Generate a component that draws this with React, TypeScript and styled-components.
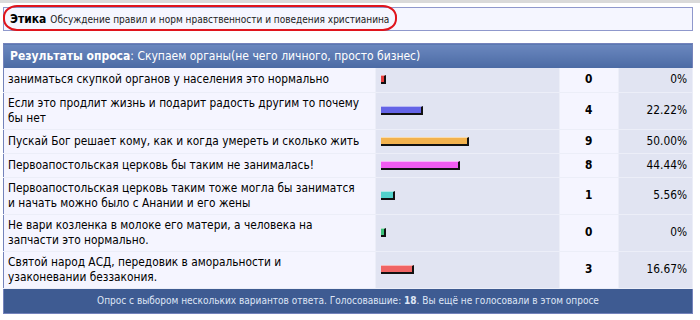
import styled, { createGlobalStyle } from "styled-components";

const GlobalStyle = createGlobalStyle`
  body {
    margin: 0;
    background: #fff;
    font-family: "DejaVu Sans Condensed", "DejaVu Sans", Verdana, sans-serif;
    color: #000;
  }
`;

const Page = styled.div`
  display: flex;
  flex-direction: column;
  width: 700px;
`;

const TopLine = styled.div`
  height: 3px;
  background: #dadada;
`;

const ForumBar = styled.div`
  position: relative;
  margin: 4px 7px 0 3px;
  height: 22px;
  border: 1px solid #8f98cc;
  background: #f5f6ff;
  display: flex;
  align-items: center;
  gap: 4px;
  padding-left: 6px;
`;

const ForumTitle = styled.span`
  font-weight: bold;
  font-size: 12px;
`;

const ForumDesc = styled.span`
  font-size: 10px;
  color: #222;
`;

const Marker = styled.div`
  position: absolute;
  left: -1px;
  top: -3px;
  width: 390px;
  height: 22px;
  border: 2px solid #e0141c;
  border-radius: 14px / 12px;
`;

const PollTable = styled.table`
  margin: 12px 7px 0 3px;
  width: 690px;
  table-layout: fixed;
  border: 1px solid #7483bb;
  border-collapse: collapse;
  font-size: 11.8px;
`;

const Col = styled.col<{ $w: number }>`
  width: ${(p) => p.$w}px;
`;

const Row = styled.tr`
  height: 24px;
`;

const HeadCell = styled.td`
  height: 24px;
  padding: 0 6px;
  background: linear-gradient(to bottom, #6b88bf, #4b6aa4);
  color: #fff;
  font-size: 12px;
`;

const Cell = styled.td<{ $alt?: boolean; $align?: string; $bold?: boolean; $tight?: boolean }>`
  background: ${(p) => (p.$alt ? "#e1e4f2" : "#f5f5ff")};
  text-align: ${(p) => p.$align || "left"};
  font-weight: ${(p) => (p.$bold ? "bold" : "normal")};
  padding: ${(p) => (p.$tight ? "3px 1px 3px 4px" : "3px 5px")};
  line-height: 15px;
  white-space: pre-line;
  border-right: 1px solid #eceef8;
  border-bottom: 1px solid #eceef8;
  vertical-align: middle;
`;

const Bar = styled.div<{ $color: string }>`
  height: 6px;
  background: ${(p) => p.$color};
  border-top: 1px solid rgba(255, 255, 255, 0.55);
  border-right: 2px solid #111;
  border-bottom: 2px solid #111;
  box-sizing: content-box;
`;

const FootCell = styled.td`
  height: 24px;
  padding: 0;
  background: #3e5b92;
  color: #dfe6f6;
  font-size: 10px;
  text-align: center;
`;

const options = [
  { text: "заниматься скупкой органов у населения это нормально", votes: 0, pct: "0%", p: 0, color: "#e53b3b" },
  { text: "Если это продлит жизнь и подарит радость другим то почему бы нет", votes: 4, pct: "22.22%", p: 22.22, color: "#6464e6" },
  { text: "Пускай Бог решает кому, как и когда умереть и сколько жить", votes: 9, pct: "50.00%", p: 50, color: "#f2b24e" },
  { text: "Первоапостольская церковь бы таким не занималась!", votes: 8, pct: "44.44%", p: 44.44, color: "#f05cf0" },
  { text: "Первоапостольская церковь таким тоже могла бы заниматся\nи начать можно было с Анании и его жены", votes: 1, pct: "5.56%", p: 5.56, color: "#52d2cc" },
  { text: "Не вари козленка в молоке его матери, а человека на\nзапчасти это нормально.", votes: 0, pct: "0%", p: 0, color: "#3cc27a" },
  { text: "Святой народ АСД, передовик в аморальности и\nузаконевании беззакония.", votes: 3, pct: "16.67%", p: 16.67, color: "#f06464" },
];

export default function App() {
  return (
    <Page>
      <GlobalStyle />
      <TopLine />
      <ForumBar>
        <ForumTitle>Этика</ForumTitle>
        <ForumDesc>Обсуждение правил и норм нравственности и поведения христианина</ForumDesc>
        <Marker />
      </ForumBar>
      <PollTable>
        <colgroup>
          <Col $w={371} />
          <Col $w={184} />
          <Col $w={59} />
          <Col $w={74} />
        </colgroup>
        <tbody>
          <tr>
            <HeadCell colSpan={4}>
              <b>Результаты опроса</b>: Скупаем органы(не чего личного, просто бизнес)
            </HeadCell>
          </tr>
          {options.map((o) => (
            <Row key={o.text}>
              <Cell $tight>{o.text}</Cell>
              <Cell $alt>
                <Bar $color={o.color} style={{ width: Math.round(o.p * 1.66) + 3 }} />
              </Cell>
              <Cell $align="center" $bold>
                {o.votes}
              </Cell>
              <Cell $alt $align="right">
                {o.pct}
              </Cell>
            </Row>
          ))}
          <tr>
            <FootCell colSpan={4}>
              Опрос с выбором нескольких вариантов ответа. Голосовавшие: <b>18</b>. Вы ещё не голосовали в этом опросе
            </FootCell>
          </tr>
        </tbody>
      </PollTable>
    </Page>
  );
}
